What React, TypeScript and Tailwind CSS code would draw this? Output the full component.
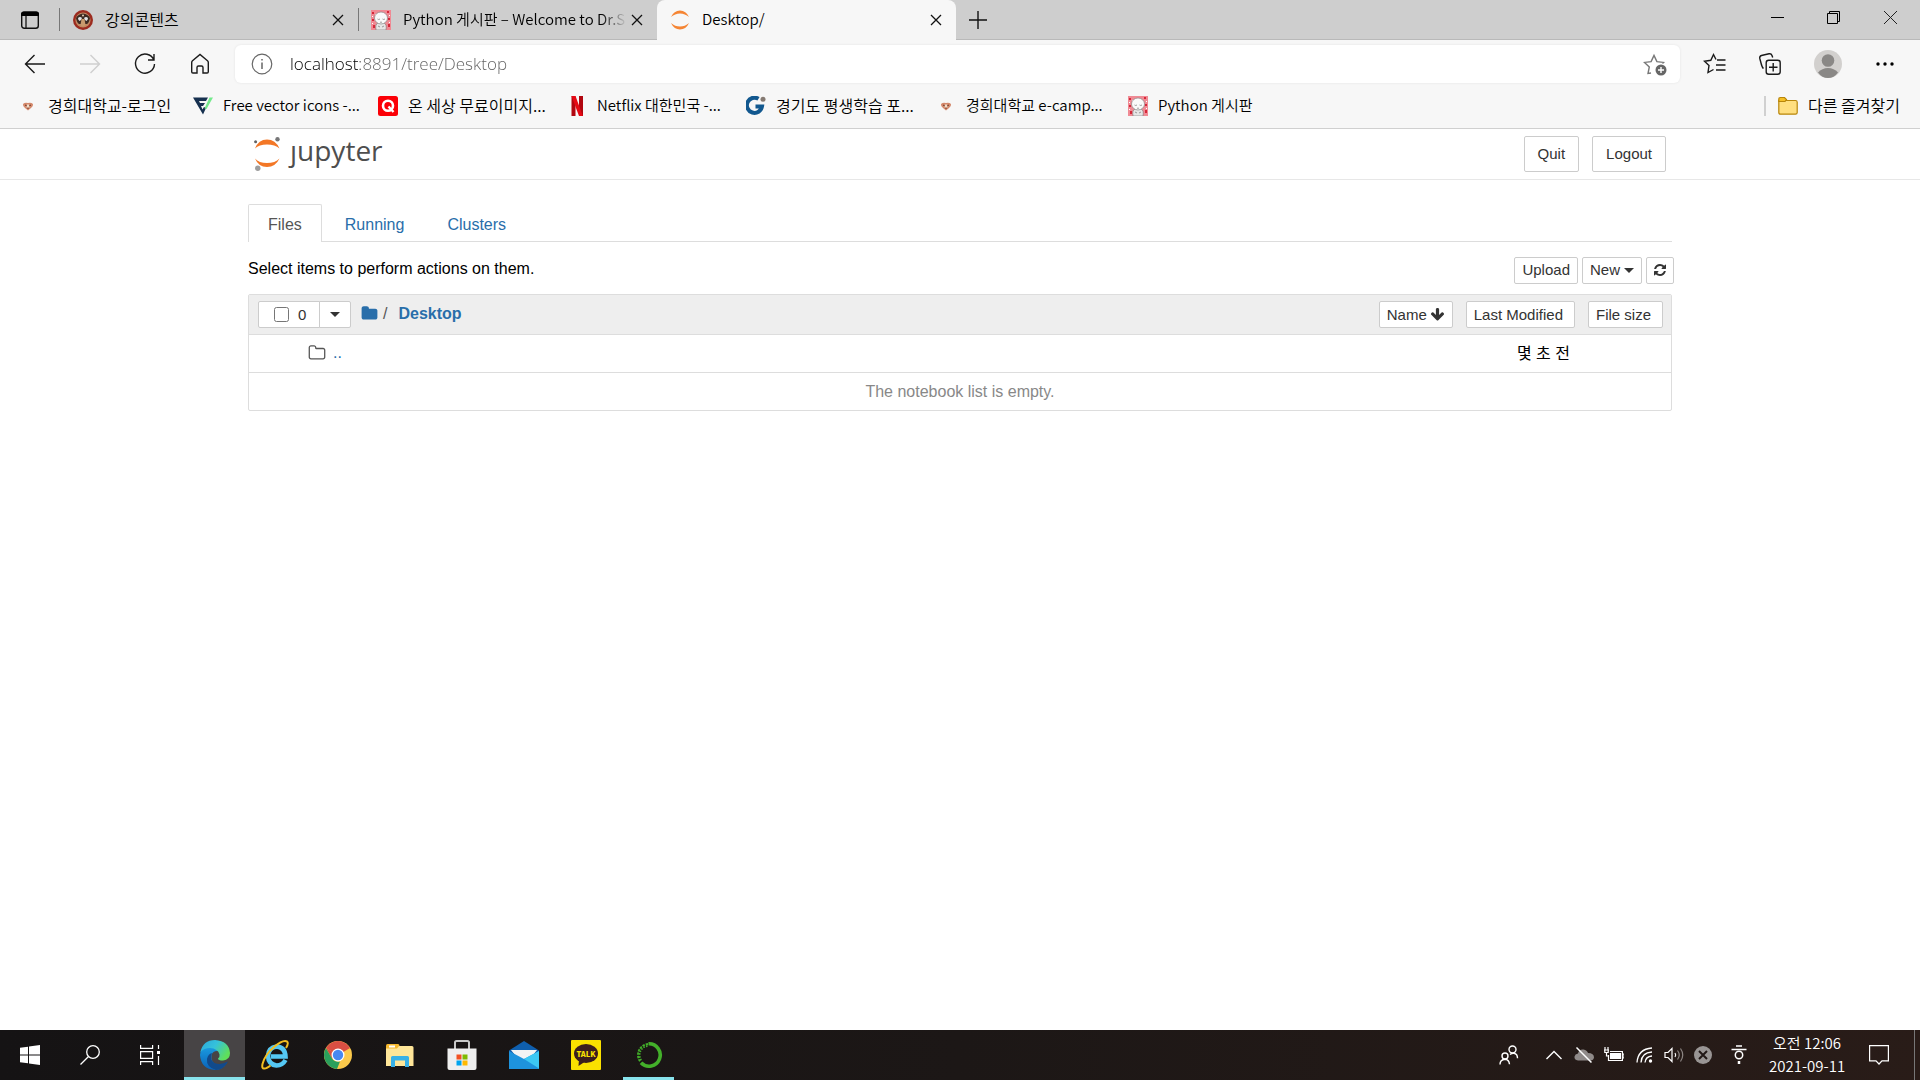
import { useState } from 'react';
import type { ReactNode } from 'react';

/* Favicons */

function LionIcon() {
  return (
    <svg viewBox="0 0 20 20" className="size-5">
      <circle cx="10" cy="10" r="10" fill="#9c2b1f" />
      <circle cx="10" cy="10" r="7.6" fill="#c08a62" />
      <path d="M3 8q2-4 7-4.500q5 .5 7 4.500q-1 5-3 6H6Q4 13 3 8z" fill="#3d2a22" />
      <path d="M5 8q2-2 4 0q-1 3-2.500 3Q5 10 5 8zM11 8q2-2 4 0q0 2-1.500 3Q12 11 11 8z" fill="#dfe3e6" />
      <path d="M8.500 9h3l1 6q-2.500 3-5 0z" fill="#c99a6c" />
      <circle cx="10" cy="5.500" r="1" fill="#e8d3b8" />
    </svg>
  );
}

function CampusIcon() {
  return (
    <svg viewBox="0 0 20 20" className="size-5">
      <path d="M5 8q2-2 5-1q3-1 5 1q.5 2-2 4l-3 2.500L7 12Q4.500 10 5 8z" fill="#d4896c" />
      <path d="M7 9l2 1M13 9l-2 1M9 12h2" stroke="#6d3a28" strokeWidth="1" />
      <path d="M9 8.500h2l.5 3h-3z" fill="#f1dcc8" />
    </svg>
  );
}

function BabyIcon() {
  return (
    <svg viewBox="0 0 20 20" className="size-5">
      <rect width="20" height="20" fill="#f08a94" />
      <path d="M1 2h2v2H1zM16 1h2v2h-2zM1 9h2v2H1zM17 8h2v2h-2zM2 15h2v3H2zM17 14h2v3h-2z" fill="#d6283a" />
      <path d="M4 4h1v1H4zM1 6h1v1H1zM18 5h1v1h-1zM18 12h1v1h-1zM1 13h1v1H1z" fill="#fff" />
      <path d="M5 20q-1-6 2-7h6q3 1 2 7z" fill="#e6e6e6" stroke="#777" strokeWidth=".6" />
      <ellipse cx="10" cy="8" rx="6.500" ry="6" fill="#fafafa" stroke="#888" strokeWidth=".7" />
      <path d="M6.500 9q1.200 1 2.500 0M11.500 9q1.200 1 2.500 0M9 12q1 .8 2 0M7 16l2 1M13 16l-2 1" stroke="#777" strokeWidth=".7" fill="none" />
    </svg>
  );
}

function JupyterFavicon() {
  return (
    <svg viewBox="0 0 20 20" className="size-5">
      <path d="M1 7Q4 .5 10 .5T19 7Q15 3.500 10 3.500T1 7zM1 13Q4 19.500 10 19.500T19 13Q15 16.500 10 16.500T1 13z" fill="#f58534" />
    </svg>
  );
}

function FreeVectorIcon() {
  return (
    <svg viewBox="0 0 20 20" className="size-5">
      <path d="M0 1.500h15l-2 3.500H6l1 2h5l-2 3H8l1.500 3.500 1.500-2.500 2 1-3 6.500z" fill="#16304f" />
      <path d="M16.500 1.500H20L13.500 13l-2-.5z" fill="#74ea8c" />
    </svg>
  );
}

function QIcon() {
  return (
    <svg viewBox="0 0 20 20" className="size-5">
      <rect width="20" height="20" rx="2.500" fill="#fb0007" />
      <circle cx="10" cy="9.700" r="5" fill="none" stroke="#fff" strokeWidth="2.600" />
      <path d="M10.500 10.500l5 5.500" stroke="#fff" strokeWidth="2.400" />
    </svg>
  );
}

function NetflixIcon() {
  return (
    <svg viewBox="0 0 20 20" className="size-5">
      <path d="M4.500 0h4v20l-4 .3zM12 0h4v20.300l-4-.3z" fill="#b1060f" />
      <path d="M4.500 0h4L16 20.300l-4-.4z" fill="#e50914" />
    </svg>
  );
}

function GyeonggiIcon() {
  return (
    <svg viewBox="0 0 20 20" className="size-5">
      <path d="M12.500 2.800A7.600 7.600 0 1 0 16 10.500H9.500" fill="none" stroke="#12588f" strokeWidth="4" />
      <circle cx="17" cy="3.200" r="2.500" fill="#857a72" />
    </svg>
  );
}

/* Toolbar icons, thin one-pixel strokes */

function Line({ children }: { children: ReactNode }) {
  return (
    <svg viewBox="0 0 24 24" fill="none" stroke="currentColor" strokeWidth="1.400" className="size-6">
      {children}
    </svg>
  );
}

const CloseX = () => (
  <svg viewBox="0 0 12 12" className="size-3" stroke="#111" strokeWidth="1.300">
    <path d="M1 1l10 10M11 1L1 11" />
  </svg>
);

/* Font Awesome 4 glyphs used by the notebook page */

const FA = {
  folder:
    'M1728 608v704q0 92-66 158t-158 66h-1216q-92 0-158-66t-66-158v-960q0-92 66-158t158-66h320q92 0 158 66t66 158v32h672q92 0 158 66t66 158z',
  folderOpen:
    'M1600 1312v-704q0-40-28-68t-68-28h-704q-40 0-68-28t-28-68v-64q0-40-28-68t-68-28h-320q-40 0-68 28t-28 68v960q0 40 28 68t68 28h1216q40 0 68-28t28-68zm128-704v704q0 92-66 158t-158 66h-1216q-92 0-158-66t-66-158v-960q0-92 66-158t158-66h320q92 0 158 66t66 158v32h672q92 0 158 66t66 158z',
  arrowDown:
    'M1675 832q0 53-37 90l-651 652q-39 37-91 37-53 0-90-37l-651-652q-38-36-38-90 0-53 38-91l74-75q39-37 91-37 53 0 90 37l294 294v-704q0-52 38-90t90-38h128q52 0 90 38t38 90v704l294-294q37-37 90-37 52 0 91 37l75 75q37 39 37 91z',
  refresh:
    'M1639 1056q0 5-1 7-64 268-268 434.500t-478 166.500q-146 0-282.500-55t-243.500-157l-129 129q-19 19-45 19t-45-19-19-45v-448q0-26 19-45t45-19h448q26 0 45 19t19 45-19 45l-137 137q71 66 161 102t187 36q134 0 250-65t186-179q11-17 53-117 8-23 30-23h192q13 0 22.500 9.500t9.500 22.500zm25-800v448q0 26-19 45t-45 19h-448q-26 0-45-19t-19-45 19-45l138-138q-148-137-349-137-134 0-250 65t-186 179q-11 17-53 117-8 23-30 23h-199q-13 0-22.500-9.500t-9.500-22.500v-7q65-268 270-434.500t480-166.500q146 0 284 55.500t245 156.500l130-129q19-19 45-19t45 19 19 45z',
};

function Fa({ name, className }: { name: keyof typeof FA; className: string }) {
  return (
    <svg viewBox="0 0 1792 1792" fill="currentColor" className={className}>
      <path d={FA[name]} />
    </svg>
  );
}

const Caret = () => (
  <svg viewBox="0 0 10 5" className="h-[5px] w-[10px]">
    <path d="M0 0h10L5 5z" fill="#333" />
  </svg>
);

const BOOKMARKS = [
  { label: '경희대학교-로그인', icon: <CampusIcon />, className: 'w-[175px] text-base' },
  { label: 'Free vector icons -...', icon: <FreeVectorIcon />, className: 'w-[185px]' },
  { label: '온 세상 무료이미지...', icon: <QIcon />, className: 'w-[189px] text-base' },
  { label: 'Netflix 대한민국 -...', icon: <NetflixIcon />, className: 'w-[179px]' },
  { label: '경기도 평생학습 포...', icon: <GyeonggiIcon />, className: 'w-[190px] text-base' },
  { label: '경희대학교 e-camp...', icon: <CampusIcon />, className: 'w-[192px]' },
  { label: 'Python 게시판', icon: <BabyIcon />, className: 'w-[150px]' },
];

function TabStrip() {
  return (
    <div className="flex h-10 items-stretch border-b border-[#b9b9b9] bg-[#cecece] text-[15px] leading-5 text-black">
      <button aria-label="Tab actions" className="flex w-[59px] items-center justify-center">
        <svg viewBox="0 0 18 18" className="size-[18px]">
          <rect x=".7" y="1.200" width="16.600" height="16" rx="2.500" fill="none" stroke="#111" strokeWidth="1.400" />
          <path d="M0 5V3q0-2.500 2.500-2.500h13Q18 .5 18 3v2z" fill="#000" />
          <path d="M5 5v12" stroke="#111" strokeWidth="1.300" />
        </svg>
      </button>
      <div className="my-2 w-px bg-[#777]" />
      <div className="flex w-[298px] items-center pr-[10px] pl-[13px]">
        <LionIcon />
        <span className="ml-3 flex-1 pb-0.5 text-base leading-5">강의콘텐츠</span>
        <button aria-label="Close tab" className="flex size-5 items-center justify-center"><CloseX /></button>
      </div>
      <div className="my-2 w-px bg-[#777]" />
      <div className="flex w-[298px] items-center pr-[10px] pl-3">
        <BabyIcon />
        <span className="ml-3 flex-1 overflow-hidden pb-0.5 whitespace-nowrap [mask-image:linear-gradient(to_right,#000_88%,transparent)]">
          Python 게시판 – Welcome to Dr.S
        </span>
        <button aria-label="Close tab" className="flex size-5 items-center justify-center"><CloseX /></button>
      </div>
      <div className="-mb-px flex w-[299px] items-center rounded-t-lg bg-[#f7f7f7] pr-[10px] pl-[13px]">
        <JupyterFavicon />
        <span className="ml-3 flex-1 pb-0.5">Desktop/</span>
        <button aria-label="Close tab" className="flex size-5 items-center justify-center"><CloseX /></button>
      </div>
      <button aria-label="New tab" className="flex w-11 items-center justify-center">
        <svg viewBox="0 0 18 18" className="size-[18px]" stroke="#111" strokeWidth="1.400">
          <path d="M9 0v18M0 9h18" />
        </svg>
      </button>
      <div className="ml-auto flex pb-1">
        <button aria-label="Minimize" className="flex w-14 items-center justify-center">
          <svg viewBox="0 0 13 13" className="size-[13px]"><path d="M0 6.500h13" stroke="#000" /></svg>
        </button>
        <button aria-label="Restore" className="flex w-14 items-center justify-center">
          <svg viewBox="0 0 13 13" className="size-[13px]" fill="none" stroke="#000">
            <path d="M.5 2.500h10v10H.5zM2.500 2.500v-2h10v10h-2" />
          </svg>
        </button>
        <button aria-label="Close" className="flex w-[59px] items-center justify-center">
          <svg viewBox="0 0 13 13" className="size-[13px]" stroke="#222"><path d="M0 0l13 13M13 0L0 13" /></svg>
        </button>
      </div>
    </div>
  );
}

function Toolbar() {
  const [url, setUrl] = useState('localhost:8891/tree/Desktop');
  return (
    <div className="flex h-12 items-center bg-[#f7f7f7] pl-[7px] text-[#1a1a1a]">
      <button aria-label="Back" className="flex w-[55px] justify-center">
        <Line><path d="M22 12H2.500M11.500 3L2.500 12l9 9" /></Line>
      </button>
      <button aria-label="Forward" className="flex w-[55px] justify-center text-[#cfcfcf]">
        <Line><path d="M2 12h19.500M12.500 3l9 9-9 9" /></Line>
      </button>
      <button aria-label="Refresh" className="flex w-[55px] justify-center">
        <Line><path d="M20.800 8A9.500 9.500 0 1 0 21.500 12M21 2v6h-6" /></Line>
      </button>
      <button aria-label="Home" className="flex w-[55px] justify-center">
        <Line><path d="M3.700 10.500q0-1 .8-1.700L12 2.500l7.500 6.300q.8.700.8 1.700v9.300q0 1.200-1.200 1.200H15v-5.500q0-1.500-1.500-1.500h-3Q9 14 9 15.500V21H4.900q-1.200 0-1.200-1.200z" /></Line>
      </button>
      <div className="ml-2 flex h-[38px] flex-1 items-center rounded-md bg-white shadow-[0_0_3px_rgba(0,0,0,0.08)]">
        <button aria-label="Site information" className="ml-4 text-[#666]">
          <svg viewBox="0 0 22 22" className="size-[22px]" fill="none" stroke="currentColor" strokeWidth="1.200">
            <circle cx="11" cy="11" r="9.800" />
            <path d="M11 9.500V16M11 6v1.600" strokeWidth="1.500" />
          </svg>
        </button>
        <input
          aria-label="Address"
          value={url}
          onChange={(e) => setUrl(e.target.value)}
          className="ml-4 flex-1 bg-[linear-gradient(to_right,#000_71px,#606060_71px)] bg-clip-text pl-px font-['Open_Sans',sans-serif] text-[17px] text-transparent outline-none"
        />
        <button aria-label="Add to favorites" className="mr-[13px] text-[#777]">
          <Line><path d="M8 21l-3 .5 1.300-6.500-4.800-4.600 6.600-.8L11 3.500l2.900 6.100 6.600.8-1 1" /><circle cx="18" cy="18" r="5.500" fill="#666" stroke="none" /><path d="M18 15v6M15 18h6" stroke="#fff" /></Line>
        </button>
      </div>
      <button aria-label="Favorites" className="ml-[7px] flex w-[55px] justify-center">
        <Line><path d="M13 7.500L10.500 2.500 7.800 8.300 1.500 9.200 6 13.600 5 20.500 10.500 17.500M14 8h8.500M13 13h9.500M13 18h9.500" /></Line>
      </button>
      <button aria-label="Collections" className="flex w-[55px] justify-center">
        <Line><rect x="8.200" y="8.200" width="14" height="14" rx="2.500" /><path d="M15.200 11v8.500M11 15.200h8.500M5.500 16.500Q4 15.500 3 11L1.800 6.500Q1.300 4.200 3.500 3.500L11 1.800q2.200-.5 3 1.700l.7 2" /></Line>
      </button>
      <button aria-label="Profile" className="flex w-[61px] justify-center">
        <svg viewBox="0 0 28 28" className="size-7">
          <circle cx="14" cy="14" r="14" fill="#d2d0ce" />
          <circle cx="14" cy="10.500" r="6.300" fill="#8a8886" />
          <path d="M4 22.500Q8 18 14 18t10 4.500Q20 28 14 28T4 22.500z" fill="#8a8886" />
        </svg>
      </button>
      <button aria-label="Settings and more" className="mr-2 flex w-[54px] justify-center">
        <svg viewBox="0 0 18 4" className="h-1 w-[18px]"><circle cx="2" cy="2" r="1.700" /><circle cx="9" cy="2" r="1.700" /><circle cx="16" cy="2" r="1.700" /></svg>
      </button>
    </div>
  );
}

function BookmarksBar() {
  return (
    <nav className="flex h-[41px] items-center border-b border-[#d0d0d0] bg-[#f7f7f7] pl-[18px] pb-[5px] text-[15px] text-black">
      {BOOKMARKS.map((b) => (
        <a key={b.label} href="#" className={`flex items-center gap-[10px] leading-5 whitespace-nowrap ${b.className}`}>
          {b.icon}
          <span className="pb-0.5">{b.label}</span>
        </a>
      ))}
      <div className="ml-auto h-5 w-0.5 bg-[#d0d0d0]" />
      <button className="mr-5 ml-3 flex items-center gap-[10px] text-base leading-5">
        <svg viewBox="0 0 20 20" className="size-5" stroke="#b8860b" strokeWidth="1.200">
          <path d="M.8 16.500v-12h16.700q1.700 0 1.700 1.700v10.300q0 1.700-1.700 1.700H2.500Q.8 18.200.8 16.500z" fill="#ffdf80" />
          <path d="M.8 5.500V3Q.8 1.500 2.300 1.500h4.200L8.500 3.500 7 5.500z" fill="#f5bf26" />
        </svg>
        <span className="pb-0.5">다른 즐겨찾기</span>
      </button>
    </nav>
  );
}

function NotebookHeader() {
  return (
    <header className="border-b border-[#e7e7e7]">
      <div className="mx-auto flex h-[50px] max-w-[1424px] items-center justify-between px-[6px]">
        <a href="#" aria-label="Jupyter" className="flex items-center gap-[10px] text-[#4e4e4e]">
          <svg viewBox="0 0 26 34" className="h-[34px] w-[26px]">
            <path d="M1 11.500Q4.500 2.500 13 2.500T25.500 11.500Q21 7.500 13 7.500T1 11.500zM1 21.500Q4.500 30 13 30T25.500 21.500Q21 26 13 26T1 21.500z" fill="#f37726" />
            <circle cx="23.500" cy="2.200" r="2.200" fill="#767677" />
            <circle cx="1.600" cy="4.800" r="1.500" fill="#616262" />
            <circle cx="3.800" cy="31.300" r="2.700" fill="#9e9e9e" />
          </svg>
          <span className="pb-2 font-['Open_Sans',sans-serif] text-[28px] leading-8">ȷupyter</span>
        </a>
        <div className="flex gap-[13px] text-[15px] leading-[22px] text-[#333]">
          <button className="rounded-xs border border-[#ccc] bg-white px-[13px] py-[6px]">Quit</button>
          <button className="rounded-xs border border-[#ccc] bg-white px-[13px] py-[6px]">Logout</button>
        </div>
      </div>
    </header>
  );
}

const smallButton = 'h-[27px] rounded-xs border border-[#ccc] bg-white text-[15px] leading-5 text-[#333]';

function NotebookTree() {
  const [checked, setChecked] = useState(false);
  return (
    <main className="mx-auto w-full max-w-[1424px] flex-1 pt-6 text-base leading-[22px]">
      <div className="flex h-[38px] gap-[3px] border-b border-[#ddd] text-[#296eaa]">
        <button className="-mb-px rounded-t-xs border border-b-0 border-[#ddd] bg-white px-[19px] pt-0.5 text-[#555]">Files</button>
        <button className="px-5 pt-1">Running</button>
        <button className="px-5 pt-1">Clusters</button>
      </div>

      <div className="mt-[14px] flex h-7 items-center justify-between">
        <p className="pb-0.5">Select items to perform actions on them.</p>
        <div className="-mr-0.5 flex gap-1">
          <button className={`${smallButton} px-[7px]`}>Upload</button>
          <button className={`${smallButton} flex items-center gap-1 px-[7px]`}>New <Caret /></button>
          <button aria-label="Refresh list" className={`${smallButton} px-[6px]`}><Fa name="refresh" className="size-[14px]" /></button>
        </div>
      </div>

      <div className="mt-[10px] rounded-xs border border-[#ddd]">
        <div className="flex h-[39px] items-center bg-[#eee] pr-2 pl-[9px]">
          <div className="flex">
            <label className="flex h-[27px] w-[62px] items-center gap-[9px] rounded-l-xs border border-[#ccc] bg-white pl-[15px] text-[15px] text-[#333]">
              <input type="checkbox" checked={checked} onChange={() => setChecked(!checked)} className="size-[15px]" />
              0
            </label>
            <button aria-label="Select menu" className="flex h-[27px] w-8 -ml-px items-center justify-center rounded-r-xs border border-[#ccc] bg-white"><Caret /></button>
          </div>
          <div className="ml-[10px] flex items-center pb-0.5 text-[#296eaa]">
            <a href="#" aria-label="Home folder"><Fa name="folder" className="size-[17px]" /></a>
            <span className="ml-[5px] text-[#555]">/</span>
            <a href="#" className="ml-[11px] font-bold">Desktop</a>
          </div>
          <div className="ml-auto flex">
            <button className={`${smallButton} flex items-center gap-[3px] px-[7px]`}>Name <Fa name="arrowDown" className="size-[15px]" /></button>
            <button className={`${smallButton} ml-[13px] pr-[11px] pl-[7px]`}>Last Modified</button>
            <button className={`${smallButton} ml-[13px] pr-[11px] pl-[7px]`}>File size</button>
          </div>
        </div>
        <div className="flex h-[38px] items-center border-t border-[#ddd] pr-[101px] pl-[59px]">
          <a href="#" className="flex items-center gap-[7px] pb-0.5 text-[#296eaa]">
            <Fa name="folderOpen" className="size-[18px] text-[#555]" />
            ..
          </a>
          <span className="ml-auto text-black">몇 초 전</span>
        </div>
        <div className="flex h-[38px] items-center justify-center border-t border-[#ddd] text-[#888]">
          The notebook list is empty.
        </div>
      </div>
    </main>
  );
}

/* Taskbar */

function EdgeIcon() {
  return (
    <svg viewBox="0 0 30 30" className="size-[30px]">
      <defs>
        <linearGradient id="edgeTop" x1="0" y1="0" x2="1" y2=".5">
          <stop offset="0" stopColor="#2aa8d8" />
          <stop offset=".5" stopColor="#35c1dc" />
          <stop offset="1" stopColor="#5fdf5a" />
        </linearGradient>
        <linearGradient id="edgeLeft" x1="0" y1="0" x2="0" y2="1">
          <stop offset="0" stopColor="#1b9de2" />
          <stop offset="1" stopColor="#0a62b8" />
        </linearGradient>
      </defs>
      <path d="M0 15Q0 7 7 6q8 0 11 5-5-.5-6.500 4Q10 24 20 25.500q4 0 7-3Q23 30 15 30 1 29 0 15z" fill="url(#edgeLeft)" />
      <path d="M12 13q-3 7 2.500 10 6 2.500 13.500-1.500Q23.500 30 16 30 6 27 7 19q1-5 5-6z" fill="#114a8b" />
      <path d="M.5 12Q3 0 15 0q14 1 15 13 0 7-7 7.500-5 0-5-2 2-2 1.500-4Q18 8.500 10 8 4 8 .5 12z" fill="url(#edgeTop)" />
    </svg>
  );
}

function IeIcon() {
  return (
    <svg viewBox="0 0 30 30" className="size-[30px]">
      <path d="M24.500 20Q21.500 25.500 15.500 25.500 7.500 24.500 7 16 7.500 7.500 15.500 6.500q8.500.5 9 10H10" fill="none" stroke="#55c8f4" strokeWidth="4.600" />
      <path d="M25 8q3-5 1-6.500Q22-.5 13 7T1.500 24q-1 5 2 4.500 2 0 6-3" fill="none" stroke="#f2be22" strokeWidth="2" />
    </svg>
  );
}

function ChromeIcon() {
  return (
    <svg viewBox="0 0 28 28" className="size-7">
      <circle cx="14" cy="14" r="14" fill="#fbc94b" />
      <path d="M14 14L1.900 7A14 14 0 0 1 26.100 7z" fill="#d94f43" />
      <path d="M14 14V7h12.100L20 7zM1.900 7L8 17.500 14 14z" fill="#d94f43" />
      <path d="M1.900 7L8 17.500q3 4 8 3L13 28A14 14 0 0 1 1.900 7z" fill="#2a9f5c" />
      <circle cx="14" cy="14" r="6.500" fill="#fff" />
      <circle cx="14" cy="14" r="5.200" fill="#4688f1" />
    </svg>
  );
}

function ExplorerIcon() {
  return (
    <svg viewBox="0 0 28 28" className="size-7">
      <path d="M0 5q0-2 1.500-2H12q1.500 0 1.500 2v3H0z" fill="#f5b82e" />
      <rect x="3" y="4.500" width="6" height="2" fill="#fff" />
      <path d="M0 7.500h11l2-2.500h13q1.500 0 1.500 1.500V25H0z" fill="#ffe699" />
      <path d="M5 26V16.500Q5 15 6.500 15h15q1.500 0 1.500 1.500V26h-4v-6.500H9V26z" fill="#38b1e8" />
    </svg>
  );
}

function StoreIcon() {
  return (
    <svg viewBox="0 0 30 30" className="size-[30px]">
      <path d="M8 10V2.500Q8 1 9.500 1h11Q22 1 22 2.500V10" fill="none" stroke="#c9c9c9" strokeWidth="2" />
      <path d="M.5 8.500h29V28q0 2-2 2h-25q-2 0-2-2z" fill="#efefef" />
      <path d="M9.500 14.500h5v5h-5z" fill="#f25022" />
      <path d="M15.500 14.500h5v5h-5z" fill="#7fba00" />
      <path d="M9.500 20.500h5v5h-5z" fill="#00a4ef" />
      <path d="M15.500 20.500h5v5h-5z" fill="#ffb900" />
    </svg>
  );
}

function MailIcon() {
  return (
    <svg viewBox="0 0 30 30" className="size-[30px]">
      <path d="M0 10.500L15 1l15 9.500v3H0z" fill="#0f5fae" />
      <path d="M2 10h26l-7 9H9z" fill="#f4f4f4" />
      <path d="M0 11l15 8L30 11v18H0z" fill="#1e93dd" />
      <path d="M30 11L15 19l15 9.500z" fill="#3cc8f4" />
    </svg>
  );
}

function TalkIcon() {
  return (
    <svg viewBox="0 0 30 30" className="size-[30px]">
      <rect width="30" height="30" rx="1" fill="#fae100" />
      <ellipse cx="15" cy="13.500" rx="12" ry="9.500" fill="#3b1e1e" />
      <path d="M8 19l-.5 7 6-4z" fill="#3b1e1e" />
      <text x="15" y="16.500" textAnchor="middle" fontSize="7.500" fontWeight="800" fill="#fae100">TALK</text>
    </svg>
  );
}

function AnacondaIcon() {
  return (
    <svg viewBox="0 0 28 28" className="size-7" fill="none" stroke="#43b02a">
      <path d="M13.500 2.800A11.200 11.200 0 1 1 6 21.800" strokeWidth="3.600" />
      <path d="M13 3A11 11 0 0 0 5.500 21" strokeWidth="1.800" strokeDasharray="2.400 1" />
      <path d="M12.500 5A9 9 0 0 0 6.500 19.500" strokeWidth="1.800" strokeDasharray="1.600 1.200" />
    </svg>
  );
}

const APPS = [
  { name: 'Internet Explorer', icon: <IeIcon /> },
  { name: 'Chrome', icon: <ChromeIcon /> },
  { name: 'File Explorer', icon: <ExplorerIcon /> },
  { name: 'Store', icon: <StoreIcon /> },
  { name: 'Mail', icon: <MailIcon /> },
  { name: 'KakaoTalk', icon: <TalkIcon /> },
];

function Taskbar() {
  return (
    <footer className="flex h-[50px] items-stretch bg-linear-to-r from-[#151314] via-[#1c1716] to-[#291c18] text-white">
      <button aria-label="Start" className="flex w-[60px] items-center justify-center">
        <svg viewBox="0 0 20 20" className="size-5" fill="#fff">
          <path d="M0 2.800L8 1.700v7.800H0zM9 1.500L20 0v9.500H9zM0 10.500h8v7.800l-8-1.100zM9 10.500h11V20L9 18.500z" />
        </svg>
      </button>
      <button aria-label="Search" className="flex w-[60px] items-center justify-center">
        <svg viewBox="0 0 20 20" className="size-5" fill="none" stroke="#fff" strokeWidth="1.300">
          <circle cx="13" cy="7" r="6.300" /><path d="M8.500 11.500L.5 19.500" />
        </svg>
      </button>
      <button aria-label="Task view" className="mr-1 flex w-[60px] items-center justify-center">
        <svg viewBox="0 0 20 20" className="size-5" fill="none" stroke="#fff" strokeWidth="1.200">
          <path d="M.6 0v3.400h12V0M.6 20v-3.400h12V20M.6 6.600h12v6.800H.6zM18.500 0v4M18.500 11v9" />
          <path d="M17 6h3v3h-3z" fill="#fff" stroke="none" />
        </svg>
      </button>
      <button aria-label="Edge" className="flex w-[61px] items-center justify-center border-b-3 border-[#88e3ec] bg-[#474445] pt-[3px]">
        <EdgeIcon />
      </button>
      {APPS.map((app) => (
        <button key={app.name} aria-label={app.name} className="flex w-[62px] items-center justify-center">{app.icon}</button>
      ))}
      <button aria-label="Anaconda" className="ml-[6px] flex w-[51px] items-center justify-center border-b-3 border-[#88e3ec] pt-[3px]">
        <AnacondaIcon />
      </button>

      <div className="ml-auto flex items-center">
        <button aria-label="People" className="mr-[26px]">
          <svg viewBox="0 0 20 20" className="size-5" fill="none" stroke="#fff" strokeWidth="1.400">
            <circle cx="13.500" cy="4.500" r="3.500" /><circle cx="6" cy="11" r="3" />
            <path d="M1 19.500q0-5 5-5.300 4 .3 4.500 5M11 9.500q2-1.500 4-1.200 3.500.7 3.500 5" />
          </svg>
        </button>
        <button aria-label="Hidden icons" className="mr-[11px]">
          <svg viewBox="0 0 18 18" className="size-[18px]" fill="none" stroke="#fff" strokeWidth="1.400"><path d="M1.500 13L9 5.500l7.500 7.500" /></svg>
        </button>
        <svg viewBox="0 0 20 18" className="mr-[10px] h-[18px] w-5">
          <path d="M4 14.500q-4-.5-3.500-4Q1 8 4 7.500 5 3 9.500 3.500 13 4 14 7q6 0 6 4.500-.5 3-3.500 3z" fill="#8f8a89" />
          <path d="M2.500 1.500l15 15" stroke="#fff" strokeWidth="1.500" />
        </svg>
        <svg viewBox="0 0 20 16" className="mr-3 h-4 w-5" fill="none" stroke="#fff" strokeWidth="1.200">
          <path d="M6 4.500h12.400v9H4.500V8M18.500 7H20v4h-1.500M0 3h5M1 3V0M4 3V0M.8 3v2.500h3.400V3M2.500 5.500V9h2" />
          <path d="M6 6h11v6H6z" fill="#fff" stroke="none" />
        </svg>
        <svg viewBox="0 0 18 18" className="mr-[10px] size-[18px]" fill="none" stroke="#fff" strokeWidth="1.300">
          <path d="M1 16.500Q2 3 16 2M5 16.500Q5.500 6.500 16 6M9 16.500q.5-6 7-6.500" />
          <circle cx="14.500" cy="15" r="1.700" fill="#fff" stroke="none" />
        </svg>
        <svg viewBox="0 0 20 18" className="mr-[10px] h-[18px] w-5" fill="none" stroke="#fff" strokeWidth="1.200">
          <path d="M1 6.500h3l4-4v13l-4-4H1z" /><path d="M11 7q1.500 2 0 4" />
          <path d="M13.500 4.500q3.500 4.500 0 9M16.500 2.500q4.500 6.500 0 13" stroke="#8c8583" />
        </svg>
        <svg viewBox="0 0 18 18" className="mr-[19px] size-[18px]">
          <circle cx="9" cy="9" r="9" fill="#999594" /><path d="M5 5l8 8M13 5l-8 8" stroke="#211816" strokeWidth="2" />
        </svg>
        <svg viewBox="0 0 16 20" className="mr-[22px] h-5 w-4" fill="none" stroke="#fff" strokeWidth="1.500">
          <path d="M5 1h6M.5 4.500h15" /><circle cx="8" cy="10" r="3.700" />
          <path d="M8 16v3" strokeWidth="2.500" />
        </svg>
        <div className="w-[76px] pb-0.5 text-center text-[15px] leading-[23px] whitespace-nowrap">
          <div>오전 12:06</div>
          <div>2021-09-11</div>
        </div>
        <button aria-label="Notifications" className="mr-[25px] ml-6">
          <svg viewBox="0 0 20 20" className="size-5" fill="none" stroke="#fff" strokeWidth="1.200">
            <path d="M.6.6h18.800v15.200H13L10 19l-3-3.200H.6z" />
          </svg>
        </button>
        <div className="mr-[5px] h-[50px] w-px bg-[#777]" />
      </div>
    </footer>
  );
}

export default function App() {
  return (
    <div className="flex min-h-screen flex-col bg-white font-['Noto_Sans_CJK_KR',sans-serif] font-[350]">
      <TabStrip />
      <Toolbar />
      <BookmarksBar />
      <div className="flex flex-1 flex-col font-['Liberation_Sans','Noto_Sans_CJK_KR',sans-serif] font-normal text-black">
        <NotebookHeader />
        <NotebookTree />
      </div>
      <Taskbar />
    </div>
  );
}
